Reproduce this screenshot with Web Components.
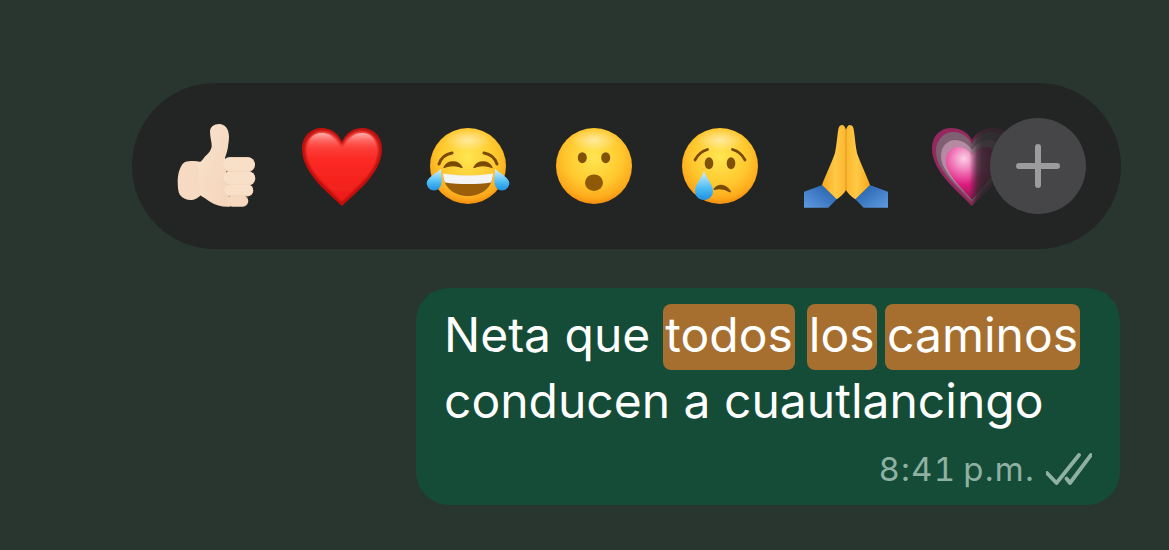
<!DOCTYPE html>
<html lang="es">
<head>
<meta charset="utf-8">
<title>Reacciones</title>
<style>
  html, body { margin: 0; height: 100%; }
  body { background: #28362f; overflow: hidden; }
</style>
</head>
<body>
<chat-screen>
  <reaction-bar>
    <reaction-emoji name="thumb"></reaction-emoji>
    <reaction-emoji name="heart"></reaction-emoji>
    <reaction-emoji name="laugh"></reaction-emoji>
    <reaction-emoji name="wow"></reaction-emoji>
    <reaction-emoji name="cry"></reaction-emoji>
    <reaction-emoji name="pray"></reaction-emoji>
    <reaction-emoji name="growing"></reaction-emoji>
  </reaction-bar>
  <message-bubble time="8:41 p.m.">Neta que <search-hit style="--gap:1.5px">todos</search-hit> <search-hit style="--gap:2.5px">los</search-hit> <search-hit style="--gap:-1px">caminos</search-hit><br>conducen a cuautlancingo</message-bubble>
</chat-screen>

<script>
// Dibujos de los emojis, caja de 84x84
const FACE = `<circle cx="42" cy="42" r="38" fill="url(#face)"/><ellipse cx="42" cy="16" rx="24" ry="11" fill="url(#glow)"/>`;
const DEFS = `<defs>
  <radialGradient id="face" cx=".5" cy=".38" r=".62">
    <stop offset="0" stop-color="#ffe650"/><stop offset=".6" stop-color="#ffc82e"/><stop offset=".88" stop-color="#fdaa1c"/><stop offset="1" stop-color="#f28d0e"/>
  </radialGradient>
  <radialGradient id="glow">
    <stop offset="0" stop-color="#fff" stop-opacity=".5"/><stop offset="1" stop-color="#fff" stop-opacity="0"/>
  </radialGradient>
  <linearGradient id="drop" x1="0" y1="0" x2="0" y2="1">
    <stop offset="0" stop-color="#d6f2ff"/><stop offset=".6" stop-color="#4dbcf4"/><stop offset="1" stop-color="#1f90e2"/>
  </linearGradient>
  <linearGradient id="red" x1="0" y1="0" x2="0" y2="1">
    <stop offset="0" stop-color="#ff5a54"/><stop offset=".4" stop-color="#fb2a24"/><stop offset="1" stop-color="#ee1c18"/>
  </linearGradient>
  <linearGradient id="shine" x1="0" y1="0" x2="0" y2="1">
    <stop offset="0" stop-color="#ffc0be" stop-opacity=".85"/><stop offset="1" stop-color="#ff3a34" stop-opacity="0"/>
  </linearGradient>
  <filter id="soft" x="-10%" y="-10%" width="120%" height="120%"><feGaussianBlur stdDeviation="1.200"/></filter>
  <linearGradient id="skin" x1="0" y1="0" x2="1" y2="1">
    <stop offset="0" stop-color="#fae3ce"/><stop offset="1" stop-color="#f3d4b9"/>
  </linearGradient>
  <linearGradient id="hand" x1="0" y1="0" x2="1" y2="0">
    <stop offset="0" stop-color="#f6a71f"/><stop offset=".55" stop-color="#ffc945"/><stop offset="1" stop-color="#fbb630"/>
  </linearGradient>
  <linearGradient id="handR" x1="1" y1="0" x2="0" y2="0">
    <stop offset="0" stop-color="#f6a71f"/><stop offset=".55" stop-color="#ffc945"/><stop offset="1" stop-color="#fbb630"/>
  </linearGradient>
  <linearGradient id="sleeve" x1="1" y1="0" x2="0" y2="1">
    <stop offset="0" stop-color="#1f5aa8"/><stop offset="1" stop-color="#5f9be0"/>
  </linearGradient>
  <linearGradient id="sleeveR" x1="0" y1="0" x2="1" y2="1">
    <stop offset="0" stop-color="#1f5aa8"/><stop offset="1" stop-color="#5f9be0"/>
  </linearGradient>
  <radialGradient id="pink" cx=".34" cy=".22" r=".8">
    <stop offset="0" stop-color="#fbd0e6"/><stop offset=".32" stop-color="#f070b4"/><stop offset=".62" stop-color="#db1a7c"/><stop offset="1" stop-color="#8f1450"/>
  </radialGradient>
  <linearGradient id="fade" x1="0" y1="0" x2="1" y2="0">
    <stop offset="0" stop-color="#fff"/><stop offset=".47" stop-color="#fff"/><stop offset=".56" stop-color="#555"/><stop offset=".62" stop-color="#2a2a2a"/><stop offset="1" stop-color="#1c1c1c"/>
  </linearGradient>
  <mask id="fadeMask"><rect width="84" height="84" fill="url(#fade)"/></mask>
</defs>`;

const EMOJIS = {
  thumb: `
    <path d="M11 38C7 40 4 48 3.700 56c0 7 .3 12 2.300 15 3 4 8 5.500 12 5 3-.5 6-2 9-5V38c-6-1.500-12-1-16 0z" fill="#f6dac1"/>
    <path d="M24 39.500c3-2 5-4 7-7 4-3.500 6-6 6.700-10 .3-4-1.700-9-1.700-15C36 3 40 0 45.300 0 51 0 55 5 55 12.700c0 4-.7 7-1 10-.5 4-2 8-3 11.300L56 82.700c-7 .5-14-1-20-5-3-2-6-4-10-6.700z" fill="url(#skin)"/>
    <rect x="48.700" y="33.300" width="32.300" height="15" rx="7.500" fill="#f2d2b6"/>
    <rect x="48.700" y="33.300" width="32" height="13.500" rx="6.800" fill="#f8dfc8"/>
    <rect x="49.300" y="47.500" width="32" height="14" rx="7" fill="#f2d2b6"/>
    <rect x="49.300" y="47.500" width="31.700" height="12.700" rx="6.300" fill="#f8dfc8"/>
    <rect x="50.300" y="60.500" width="29" height="12" rx="6" fill="#f2d2b6"/>
    <rect x="50.300" y="60.500" width="28.700" height="10.800" rx="5.400" fill="#f8dfc8"/>
    <rect x="52.700" y="71.500" width="21.600" height="11.200" rx="5.600" fill="#f5d8be"/>`,
  heart: `
    <path d="M42 82C30 70 2 50 2 25 2 12 11 4 22 4c9 0 16 5 20 14 4-9 11-14 20-14 11 0 20 8 20 21 0 25-28 45-40 57z" fill="#bf100d"/>
    <path d="M42 78C31 66 5.500 48 5.500 26 5.500 15 13 7.500 22.500 7.500 31 7.500 38 13 42 22c4-9 11-14.500 19.500-14.500C71 7.500 78.500 15 78.500 26c0 22-25.500 40-36.500 52z" fill="url(#red)" filter="url(#soft)"/>
    <path d="M8 24C8 14 14 9 22 9c8 0 14 5 19 16-8 2-24 3-33-1zM76 24c0-10-6-15-14-15-8 0-14 5-19 16 8 2 24 3 33-1z" fill="url(#shine)"/>`,
  laugh: `
    ${FACE}
    <path d="M13 40c2-6 7-10 13-11" fill="none" stroke="#7a4a05" stroke-width="3" stroke-linecap="round"/>
    <path d="M71 40c-2-6-7-10-13-11" fill="none" stroke="#7a4a05" stroke-width="3" stroke-linecap="round"/>
    <path d="M18 43.500c2-4 5.500-5.500 9-5.500s7 1.500 9 5.500c-6-2.500-12-2.500-18 0zM48 43.500c2-4 5.500-5.500 9-5.500s7 1.500 9 5.500c-6-2.500-12-2.500-18 0z" fill="#7a4a05" stroke="#7a4a05" stroke-width="1.300" stroke-linejoin="round"/>
    <path d="M17 50c16 2.500 34 2.500 50 0 0 12-10 22-25 22S17 62 17 50z" fill="#9a5f08"/>
    <path d="M17 49.500c16 2.500 34 2.500 50 0 0 3-.5 6-2 9-14 2-32 2-46 0-1.500-3-2-6-2-9z" fill="#f4f4f4"/>
    <path d="M15 45c0 5 1 9 .7 13-.4 5-3.700 8.500-7.700 8.500S.7 63 .7 59C.7 54 9 50 15 45z" fill="url(#drop)"/>
    <path d="M69 45c0 5-1 9-.7 13 .4 5 3.700 8.500 7.700 8.500s7.300-3.500 7.300-7.500C83.300 54 75 50 69 45z" fill="url(#drop)"/>`,
  wow: `
    ${FACE}
    <ellipse cx="30.300" cy="33.700" rx="4.500" ry="5.500" fill="#7f5207"/>
    <ellipse cx="53.700" cy="33.700" rx="4.500" ry="5.500" fill="#7f5207"/>
    <ellipse cx="42" cy="58.700" rx="9" ry="8.300" fill="#8f5a08"/>`,
  cry: `
    ${FACE}
    <ellipse cx="31" cy="39.300" rx="4.300" ry="6" fill="#7f5207"/>
    <ellipse cx="53" cy="39.300" rx="4.300" ry="6" fill="#7f5207"/>
    <path d="M17 36c2.500-5 7-9 12.500-10.500" fill="none" stroke="#7a4a05" stroke-width="2.800" stroke-linecap="round"/>
    <path d="M54.500 25.500c5.500 1.500 10 5.500 12.500 10.500" fill="none" stroke="#7a4a05" stroke-width="2.800" stroke-linecap="round"/>
    <path d="M36.500 65c3-4 10-6 15.500 2.500-5-3-10-3.800-15.500-2.500z" fill="#7a4a05" stroke="#7a4a05" stroke-width="1.800" stroke-linejoin="round"/>
    <path d="M26 46.700c2 7.500 9 13 9 20.300 0 5-4 9-9 9s-9-4-9-9c0-7.300 7-12.800 9-20.300z" fill="url(#drop)"/>`,
  pray: `
    <path d="M0 83.700V67.700L18.300 61l14.400 14.300-8.400 8.400z" fill="url(#sleeve)"/>
    <path d="M84 83.700V67.700L65.700 61 51.300 75.300l8.400 8.400z" fill="url(#sleeveR)"/>
    <path d="M42 6c-.7-3-2-5-4-5-2.500 0-3.500 2-4 6-1 7-1.500 15-3 22-3 9-9 21-13 32l14.700 14.300c3.300-2.300 7.300-5.300 9.300-9.300z" fill="url(#hand)"/>
    <path d="M42 6c.7-3 2-5 4-5 2.500 0 3.500 2 4 6 1 7 1.500 15 3 22 3 9 9 21 13 32L51.300 75.300C48 73 44 70 42 66z" fill="url(#handR)"/>
    <path d="M42 6v60" stroke="#e0951a" stroke-width="1"/>`,
  growing: `
    <g mask="url(#fadeMask)">
      <path d="M42 82C32 70 2 50 2 24 2 11 11 4 21 4c9 0 17 4 21 12 4-8 12-12 21-12 10 0 19 7 19 20 0 26-30 46-40 58z" fill="#96285f"/>
      <path d="M42 78C32 66 6 48 6 27 6 16 14 8 23 8c8 0 15 4 19 12 4-8 11-12 19-12 9 0 17 8 17 19 0 21-26 39-36 51z" fill="#7d6071"/>
      <path d="M42 76C33 65 11 49 11 32c0-10 7-16 14-16 7 0 13 4 17 10 4-6 10-10 17-10 7 0 14 6 14 16 0 17-22 33-31 44z" fill="#b58aa2"/>
      <path d="M42 76C34 66 16 51 16 37c0-9 6-14 12-14 6 0 10 3 14 8 4-5 8-8 14-8 6 0 12 5 12 14 0 14-18 29-26 39z" fill="url(#pink)"/>
    </g>`
};

class ChatScreen extends HTMLElement {
  constructor() {
    super();
    this.attachShadow({ mode: 'open' });
    this.shadowRoot.innerHTML = `
      <style>
        :host {
          display: flex;
          flex-direction: column;
          align-items: flex-end;
          gap: 39px;
          box-sizing: border-box;
          width: 1169px;
          height: 550px;
          padding: 83px 49px 0 0;
          background: #28362f;
          font-family: Inter, "Liberation Sans", sans-serif;
        }
      </style>
      <slot></slot>`;
  }
}

class ReactionBar extends HTMLElement {
  constructor() {
    super();
    this.attachShadow({ mode: 'open' });
    this.shadowRoot.innerHTML = `
      <style>
        :host {
          display: flex;
          align-items: center;
          gap: 42px;
          position: relative;
          box-sizing: border-box;
          width: 989px;
          height: 166px;
          padding-left: 42px;
          border-radius: 83px;
          background: #232525;
          overflow: hidden;
          margin-right: -1px;
        }
        .add {
          position: absolute;
          right: 35px;
          top: 35px;
          width: 96px;
          height: 96px;
          border-radius: 50%;
          background: #464648;
          display: flex;
          align-items: center;
          justify-content: center;
        }
      </style>
      <slot></slot>
      <div class="add">
        <svg width="46" height="46" viewBox="0 0 46 46">
          <path d="M23 4v38M4 23h38" stroke="#9c9c9e" stroke-width="6" stroke-linecap="round"/>
        </svg>
      </div>`;
  }
}

class ReactionEmoji extends HTMLElement {
  constructor() {
    super();
    this.attachShadow({ mode: 'open' });
  }
  connectedCallback() {
    const name = this.getAttribute('name');
    this.shadowRoot.innerHTML = `
      <style>
        :host { display: block; flex: none; width: 84px; height: 84px; }
        svg { display: block; }
      </style>
      <svg width="84" height="84" viewBox="0 0 84 84" overflow="visible">${DEFS}${EMOJIS[name]}</svg>`;
  }
}

class MessageBubble extends HTMLElement {
  constructor() {
    super();
    this.attachShadow({ mode: 'open' });
  }
  connectedCallback() {
    const time = this.getAttribute('time');
    this.shadowRoot.innerHTML = `
      <style>
        :host {
          display: flex;
          flex-direction: column;
          box-sizing: border-box;
          width: 704px;
          height: 217px;
          padding: 14px 28px 0 28px;
          border-radius: 33px;
          background: #154c37;
          color: #fff;
          font-size: 48px;
          line-height: 66px;
        }
        .text { white-space: nowrap; }
        .meta {
          display: flex;
          justify-content: flex-end;
          align-items: center;
          gap: 11px;
          margin-top: 13px;
          color: #8fb1a3;
          font-size: 33px;
          line-height: 44px;
          letter-spacing: 1.2px;
          word-spacing: -3px;
          font-variant-numeric: tabular-nums;
        }
        svg { display: block; }
      </style>
      <div class="text"><slot></slot></div>
      <div class="meta">
        <span>${time}</span>
        <svg width="46" height="32" viewBox="0 0 46 32" fill="none" stroke="#8fb1a3" stroke-width="3.800" stroke-linecap="round" stroke-linejoin="round">
          <path d="M1 20l9.500 10L33 2"/>
          <path d="M20.500 25.500L24 30 45 2"/>
        </svg>
      </div>`;
  }
}

class SearchHit extends HTMLElement {
  constructor() {
    super();
    this.attachShadow({ mode: 'open' });
    this.shadowRoot.innerHTML = `
      <style>
        :host {
          display: inline-block;
          line-height: 62px;
          padding: 0 2px 4px;
          margin: 0 -2px -4px calc(var(--gap, 0px) - 2px);
          border-radius: 8px;
          background: #a66f2f;
        }
      </style>
      <slot></slot>`;
  }
}

customElements.define('chat-screen', ChatScreen);
customElements.define('reaction-bar', ReactionBar);
customElements.define('reaction-emoji', ReactionEmoji);
customElements.define('message-bubble', MessageBubble);
customElements.define('search-hit', SearchHit);
</script>
</body>
</html>
